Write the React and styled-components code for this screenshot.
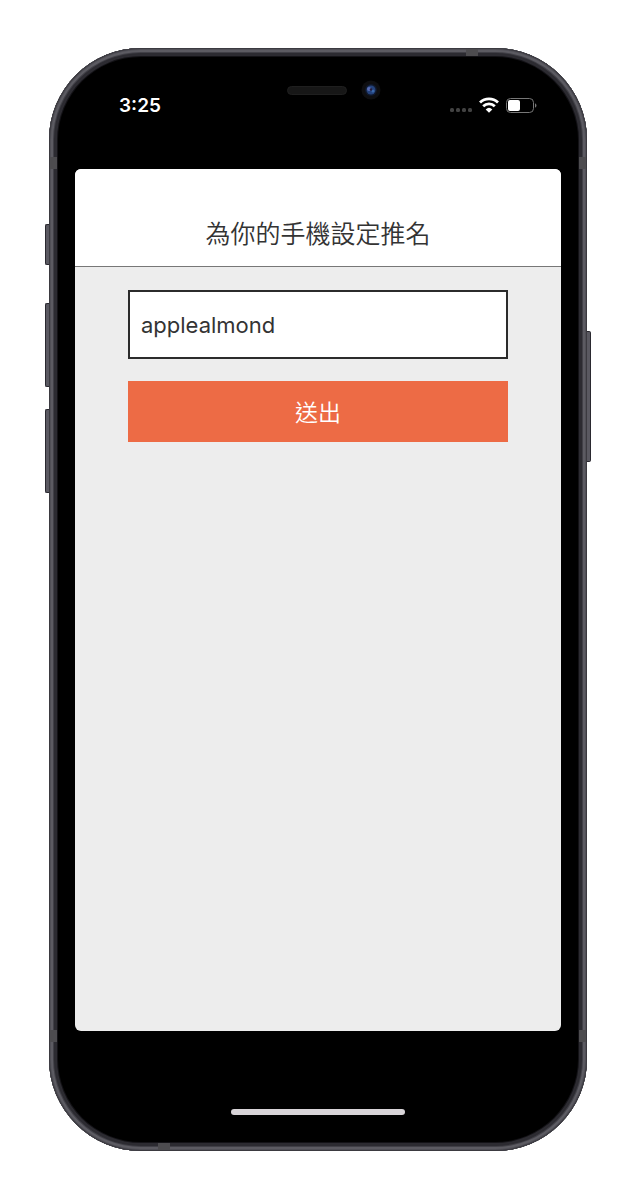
import React, { useState } from "react";
import styled, { createGlobalStyle } from "styled-components";

const GlobalStyle = createGlobalStyle`
  * {
    box-sizing: border-box;
  }

  body {
    margin: 0;
    background-color: #ffffff;
    font-family: Inter, "Noto Sans CJK TC", sans-serif;
    color: #333333;
  }
`;

const Page = styled.main`
  display: flex;
  min-height: 100vh;
  padding: 48px 48px 49px 49px;
`;

const Phone = styled.div`
  position: relative;
  display: flex;
  flex: 1;
  flex-direction: column;
  padding: 9px 26px;
  border-radius: 92px;
  background-color: #000000;
  box-shadow:
    inset 0 0 0 1px #3b3a40,
    inset 0 0 0 2px #515057,
    inset 0 0 0 4px #5c5b62,
    inset 0 0 0 5px #414047,
    inset 0 0 0 8px #2c2b31,
    inset 0 0 0 9px #131216;
`;

const SideButton = styled.span`
  position: absolute;
  top: ${({ $top }) => $top}px;
  ${({ $side }) => $side}: -4px;
  width: 4px;
  height: ${({ $height }) => $height}px;
  border: 1px solid #2a2930;
  border-${({ $side }) => ($side === "left" ? "right" : "left")}: 0;
  border-radius: ${({ $side }) =>
    $side === "left" ? "2px 0 0 2px" : "0 2px 2px 0"};
  background-color: #5a5961;
`;

const AntennaBand = styled.span`
  position: absolute;
  ${({ $edge }) => $edge}: 1px;
  ${({ $from }) => $from}: 109px;
  width: ${({ $flat }) => ($flat ? 12 : 7)}px;
  height: ${({ $flat }) => ($flat ? 7 : 12)}px;
  background-color: #4d4c4f;
`;

const StatusBar = styled.div`
  display: grid;
  grid-template-columns: 1fr auto 1fr;
  height: 112px;
  padding: 23px 24px 0 44px;
`;

const Time = styled.time`
  margin-top: 14px;
  color: #ffffff;
  font-size: 19px;
  font-weight: 600;
  line-height: 24px;
`;

const Sensors = styled.div`
  display: flex;
  align-items: center;
  gap: 14px;
  height: 20px;
  padding-left: 12px;
`;

const Speaker = styled.span`
  width: 60px;
  height: 9px;
  border: 1px solid #1f1f1f;
  border-radius: 5px;
  background-color: #171717;
`;

const Indicators = styled.div`
  display: flex;
  align-items: center;
  justify-content: flex-end;
  gap: 7px;
  height: 24px;
  margin-top: 13px;
`;

const Screen = styled.section`
  display: flex;
  flex: 1;
  flex-direction: column;
  overflow: hidden;
  border-radius: 6px;
  background-color: #ededed;
`;

const Header = styled.header`
  padding: 48px 16px 14px;
  border-bottom: 1px solid #777777;
  background-color: #ffffff;
  text-align: center;
`;

const Title = styled.h1`
  margin: 0;
  font-size: 25px;
  font-weight: 350;
  line-height: 35px;
`;

const Form = styled.form`
  display: flex;
  flex-direction: column;
  gap: 22px;
  padding: 23px 53px;
`;

const NameInput = styled.input`
  width: 100%;
  height: 69px;
  padding: 0 11px;
  border: 2px solid #2b2b2b;
  border-radius: 0;
  outline: none;
  background-color: #ffffff;
  color: #333333;
  font-family: inherit;
  font-size: 22px;
`;

const SubmitButton = styled.button`
  height: 61px;
  padding: 0 16px 2px;
  border: 0;
  background-color: #ed6b45;
  color: #ffffff;
  font-family: inherit;
  font-size: 23px;
  font-weight: 350;
  cursor: pointer;
`;

const HomeArea = styled.footer`
  display: flex;
  justify-content: center;
  height: 111px;
  padding-top: 78px;
`;

const HomeIndicator = styled.span`
  width: 174px;
  height: 6px;
  border-radius: 3px;
  background-color: #d8d4d8;
`;

const Camera = () => (
  <svg width="20" height="20" viewBox="0 0 20 20" aria-hidden="true">
    <circle cx="10" cy="10" r="9.5" fill="#0e0e10" />
    <circle cx="10" cy="10" r="6" fill="#10182b" />
    <circle cx="10" cy="10" r="4.5" fill="#24427c" />
    <circle cx="8" cy="9" r="2" fill="#5a6db4" />
    <circle cx="12" cy="11" r="1.5" fill="#3a69ac" />
    <circle cx="10" cy="9.5" r="1.2" fill="#251e3d" />
  </svg>
);

const Signal = () => (
  <svg width="22" height="24" viewBox="0 0 22 24" aria-hidden="true">
    {[2, 8, 14, 20].map((x) => (
      <rect key={x} x={x - 2} y="15" width="4" height="4" rx="1.5" fill="#424242" />
    ))}
  </svg>
);

const Wifi = () => (
  <svg width="20" height="16" viewBox="0 0 20 16" aria-hidden="true">
    <g fill="none" stroke="#ffffff" strokeWidth="2.8">
      <path d="M1 5.6a12.8 12.8 0 0 1 18 0" />
      <path d="M4.2 9.3a8.2 8.2 0 0 1 11.6 0" />
    </g>
    <path
      d="M10 15.8 6.7 12.4a4.8 4.8 0 0 1 6.6 0z"
      fill="#ffffff"
    />
  </svg>
);

const Battery = () => (
  <svg width="31" height="15" viewBox="0 0 31 15" aria-hidden="true">
    <rect x="0.5" y="0.5" width="27" height="14" rx="4" fill="none" stroke="#777777" />
    <rect x="2" y="2" width="12" height="11" rx="2" fill="#ffffff" />
    <path d="M29 5.3c2 .8 2 3.6 0 4.4z" fill="#777777" />
  </svg>
);

const App = () => {
  const [name, setName] = useState("applealmond");

  return (
    <>
      <GlobalStyle />
      <Page>
        <Phone>
          <SideButton $side="left" $top={176} $height={41} />
          <SideButton $side="left" $top={255} $height={84} />
          <SideButton $side="left" $top={361} $height={84} />
          <SideButton $side="right" $top={283} $height={131} />
          <AntennaBand $edge="left" $from="top" />
          <AntennaBand $edge="right" $from="top" />
          <AntennaBand $edge="left" $from="bottom" />
          <AntennaBand $edge="right" $from="bottom" />
          <AntennaBand $flat $edge="top" $from="right" />
          <AntennaBand $flat $edge="bottom" $from="left" />
          <StatusBar>
            <Time>3:25</Time>
            <Sensors>
              <Speaker />
              <Camera />
            </Sensors>
            <Indicators>
              <Signal />
              <Wifi />
              <Battery />
            </Indicators>
          </StatusBar>
          <Screen>
            <Header>
              <Title>為你的手機設定推名</Title>
            </Header>
            <Form onSubmit={(e) => e.preventDefault()}>
              <NameInput
                type="text"
                aria-label="為你的手機設定推名"
                value={name}
                onChange={(e) => setName(e.target.value)}
              />
              <SubmitButton type="submit">送出</SubmitButton>
            </Form>
          </Screen>
          <HomeArea>
            <HomeIndicator />
          </HomeArea>
        </Phone>
      </Page>
    </>
  );
};

export default App;
